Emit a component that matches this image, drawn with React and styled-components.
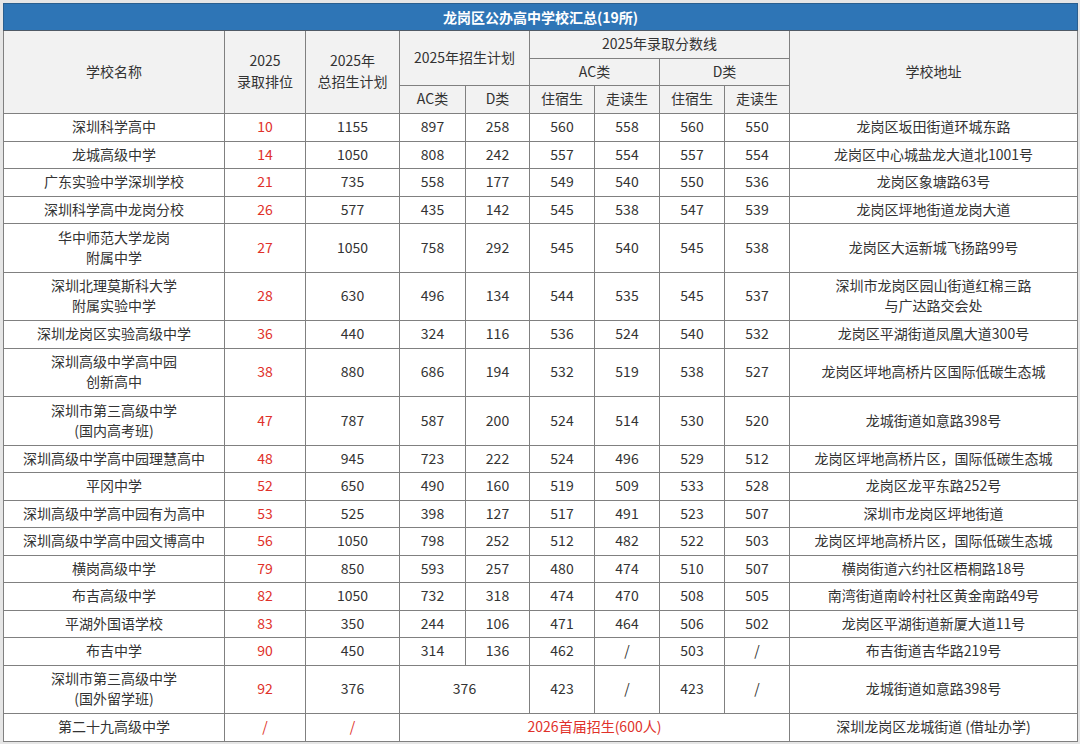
import React from "react";
import styled, { createGlobalStyle } from "styled-components";

const Global = createGlobalStyle`
  html, body { margin: 0; padding: 0; background: #e6e6e6; }
  body { font-family: "Noto Sans CJK SC", "Noto Sans", sans-serif; }
`;

const Page = styled.div`
  padding: 3px 3px 0 3px;
  width: 1074px;
`;

const Table = styled.table`
  width: 1074px;
  border-collapse: collapse;
  table-layout: fixed;
  font-size: 14px;
  color: #333;
  background: #fff;
  border: 1px solid #6b6b6b;
`;

const Title = styled.th`
  height: 26px;
  padding: 0;
  background: #2e75b6;
  color: #fff;
  font-size: 14px;
  font-weight: 700;
  line-height: 20px;
  text-align: center;
  border: 1px solid #2a5f8f;
  border-bottom-color: #505a66;
`;

const HeadRow = styled.tr`
  height: ${(p) => p.$h}px;
`;

const Th = styled.th`
  padding: 0 0 2px 0;
  font-weight: 400;
  background: #f2f2f2;
  border: 1px solid #808080;
  text-align: center;
  vertical-align: middle;
  line-height: 21px;
`;

const Row = styled.tr`
  height: ${(p) => (p.$double ? 48.5 : 27.5)}px;
`;

const Td = styled.td`
  padding: 0 0 2px 0;
  border: 1px solid #808080;
  text-align: center;
  vertical-align: middle;
  line-height: 20px;
  color: ${(p) => (p.$red ? "#e0312a" : "#333")};
  white-space: nowrap;
`;

const widths = [221, 81, 94, 66, 64, 65, 65, 65, 65, 288];

const rows = [
  ["深圳科学高中", "10", "1155", "897", "258", "560", "558", "560", "550", "龙岗区坂田街道环城东路"],
  ["龙城高级中学", "14", "1050", "808", "242", "557", "554", "557", "554", "龙岗区中心城盐龙大道北1001号"],
  ["广东实验中学深圳学校", "21", "735", "558", "177", "549", "540", "550", "536", "龙岗区象塘路63号"],
  ["深圳科学高中龙岗分校", "26", "577", "435", "142", "545", "538", "547", "539", "龙岗区坪地街道龙岗大道"],
  [["华中师范大学龙岗", "附属中学"], "27", "1050", "758", "292", "545", "540", "545", "538", "龙岗区大运新城飞扬路99号"],
  [["深圳北理莫斯科大学", "附属实验中学"], "28", "630", "496", "134", "544", "535", "545", "537", ["深圳市龙岗区园山街道红棉三路", "与广达路交会处"]],
  ["深圳龙岗区实验高级中学", "36", "440", "324", "116", "536", "524", "540", "532", "龙岗区平湖街道凤凰大道300号"],
  [["深圳高级中学高中园", "创新高中"], "38", "880", "686", "194", "532", "519", "538", "527", "龙岗区坪地高桥片区国际低碳生态城"],
  [["深圳市第三高级中学", "(国内高考班)"], "47", "787", "587", "200", "524", "514", "530", "520", "龙城街道如意路398号"],
  ["深圳高级中学高中园理慧高中", "48", "945", "723", "222", "524", "496", "529", "512", "龙岗区坪地高桥片区，国际低碳生态城"],
  ["平冈中学", "52", "650", "490", "160", "519", "509", "533", "528", "龙岗区龙平东路252号"],
  ["深圳高级中学高中园有为高中", "53", "525", "398", "127", "517", "491", "523", "507", "深圳市龙岗区坪地街道"],
  ["深圳高级中学高中园文博高中", "56", "1050", "798", "252", "512", "482", "522", "503", "龙岗区坪地高桥片区，国际低碳生态城"],
  ["横岗高级中学", "79", "850", "593", "257", "480", "474", "510", "507", "横岗街道六约社区梧桐路18号"],
  ["布吉高级中学", "82", "1050", "732", "318", "474", "470", "508", "505", "南湾街道南岭村社区黄金南路49号"],
  ["平湖外国语学校", "83", "350", "244", "106", "471", "464", "506", "502", "龙岗区平湖街道新厦大道11号"],
  ["布吉中学", "90", "450", "314", "136", "462", "/", "503", "/", "布吉街道吉华路219号"],
];

const Lines = ({ v }) =>
  Array.isArray(v) ? (
    <>
      {v[0]}
      <br />
      {v[1]}
    </>
  ) : (
    v
  );

export default function App() {
  return (
    <>
      <Global />
      <Page>
        <Table>
          <colgroup>
            {widths.map((w, i) => (
              <col key={i} style={{ width: w }} />
            ))}
          </colgroup>
          <thead>
            <tr>
              <Title colSpan={10}>龙岗区公办高中学校汇总(19所)</Title>
            </tr>
            <HeadRow $h={28}>
              <Th rowSpan={3}>学校名称</Th>
              <Th rowSpan={3}>
                2025
                <br />
                录取排位
              </Th>
              <Th rowSpan={3}>
                2025年
                <br />
                总招生计划
              </Th>
              <Th colSpan={2} rowSpan={2}>
                2025年招生计划
              </Th>
              <Th colSpan={4}>2025年录取分数线</Th>
              <Th rowSpan={3}>学校地址</Th>
            </HeadRow>
            <HeadRow $h={27}>
              <Th colSpan={2}>AC类</Th>
              <Th colSpan={2}>D类</Th>
            </HeadRow>
            <HeadRow $h={28}>
              <Th>AC类</Th>
              <Th>D类</Th>
              <Th>住宿生</Th>
              <Th>走读生</Th>
              <Th>住宿生</Th>
              <Th>走读生</Th>
            </HeadRow>
          </thead>
          <tbody>
            {rows.map((r, i) => (
              <Row key={i} $double={Array.isArray(r[0]) || Array.isArray(r[9])}>
                {r.map((c, j) => (
                  <Td key={j} $red={j === 1}>
                    <Lines v={c} />
                  </Td>
                ))}
              </Row>
            ))}
            <Row $double>
              <Td>
                深圳市第三高级中学
                <br />
                (国外留学班)
              </Td>
              <Td $red>92</Td>
              <Td>376</Td>
              <Td colSpan={2}>376</Td>
              <Td>423</Td>
              <Td>/</Td>
              <Td>423</Td>
              <Td>/</Td>
              <Td>龙城街道如意路398号</Td>
            </Row>
            <Row>
              <Td>第二十九高级中学</Td>
              <Td $red>/</Td>
              <Td $red>/</Td>
              <Td colSpan={6} $red>
                2026首届招生(600人)
              </Td>
              <Td>深圳龙岗区龙城街道 (借址办学)</Td>
            </Row>
          </tbody>
        </Table>
      </Page>
    </>
  );
}
